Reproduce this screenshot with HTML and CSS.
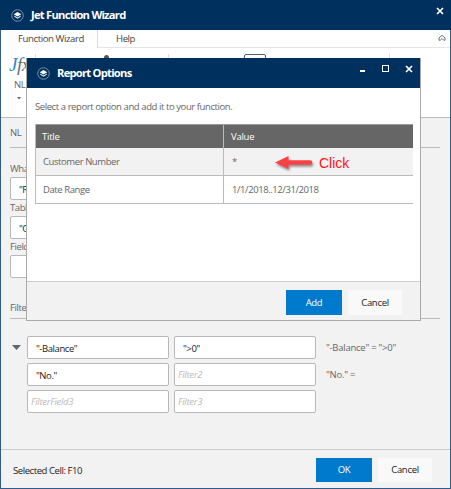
FILE: index.html
```html
<!DOCTYPE html>
<html lang="en">
<head>
<meta charset="utf-8">
<title>Jet Function Wizard</title>
<link rel="stylesheet" href="styles.css">
</head>
<body>
<svg width="0" height="0" class="defs">
  <symbol id="logo" viewBox="0 0 14 14">
    <circle cx="7" cy="7" r="6.2" fill="none" stroke="#8fa4bd" stroke-width=".9"/>
    <path d="M7 3.2 11 5.7 7 8.1 3 5.7Z" fill="#fff"/>
    <path d="M3.5 7 7 9.1l3.5-2.1v1.4L7 10.6 3.5 8.4Z" fill="#dfe6ee"/>
  </symbol>
  <symbol id="close" viewBox="0 0 8 8"><path d="M1 1 7 7M7 1 1 7" stroke="#fff" stroke-width="1.7"/></symbol>
</svg>
<main class="window">
  <header class="titlebar">
    <svg class="logo"><use href="#logo"/></svg>
    <h1 class="title main-title">Jet Function Wizard</h1>
    <svg class="close main-close"><use href="#close"/></svg>
  </header>
  <nav class="tabs">
    <span class="tab active">Function Wizard</span>
    <span class="tab">Help</span>
    <svg class="collapse" viewBox="0 0 8 8"><path d="M1 4 4 1.3 7 4V6.2H5.7L4 4.5 2.3 6.2H1Z" fill="none" stroke="#555e70" stroke-width=".9"/></svg>
  </nav>
  <section class="ribbon">
    <div class="tool">
      <div class="jfx"><span class="j">J</span>fx</div>
      <div class="tool-name">NL</div>
      <svg class="caret" viewBox="0 0 4 3"><path d="M0 0H4L2 2.5Z" fill="#666"/></svg>
    </div>
    <i class="sep sep-a"></i><i class="dot"></i><i class="sep sep-b"></i><i class="box"></i><i class="sep sep-c"></i>
  </section>
  <section class="form">
    <h2 class="heading">NL</h2>
    <div class="fields">
      <label>What</label><div class="input">"R</div>
      <label>Table</label><div class="input">"C</div>
      <label>Field</label><div class="input"></div>
    </div>
    <h2 class="heading filters-heading">Filters</h2>
    <div class="filters">
      <svg class="expander" viewBox="0 0 9 5"><path d="M0 0H9L4.5 5Z" fill="#5c6675"/></svg>
      <div class="input">"-Balance"</div><div class="input">"&gt;0"</div><span class="expr">"-Balance" = "&gt;0"</span>
      <i></i>
      <div class="input">"No."</div><div class="input hint">Filter2</div><span class="expr">"No." =</span>
      <i></i>
      <div class="input hint">FilterField3</div><div class="input hint">Filter3</div>
    </div>
  </section>
  <footer class="footer">
    <span class="status">Selected Cell: F10</span>
    <button class="btn primary">OK</button>
    <button class="btn">Cancel</button>
  </footer>
</main>
<section class="dialog">
  <header class="titlebar">
    <svg class="logo"><use href="#logo"/></svg>
    <h1 class="title">Report Options</h1>
    <i class="min"></i><i class="max"></i>
    <svg class="close"><use href="#close"/></svg>
  </header>
  <div class="content">
    <p class="intro">Select a report option and add it to your function.</p>
    <div class="table">
      <div class="row head"><span>Title</span><span>Value</span></div>
      <div class="row selected"><span>Customer Number</span><span>*</span></div>
      <div class="row"><span>Date Range</span><span>1/1/2018..12/31/2018</span></div>
    </div>
  </div>
  <footer class="dialog-footer">
    <button class="btn primary">Add</button>
    <button class="btn">Cancel</button>
  </footer>
</section>
<div class="callout">
  <svg class="arrow" viewBox="0 0 42 20"><path d="M2 8.5 15.5 2V6.2H37a2.3 2.3 0 0 1 0 4.6H15.5V15Z" fill="#fb4143"/></svg>
  <span>Click</span>
</div>
</body>
</html>
```
FILE: styles.css
```css
* { box-sizing: border-box; }
body {
  margin: 0;
  width: 451px;
  height: 489px;
  overflow: hidden;
  font: 9.5px/12px "Open Sans", "Noto Sans", sans-serif;
  letter-spacing: -0.42px;
  color: #666;
}
h1, h2, p { margin: 0; font: inherit; }
svg, i { display: block; flex: none; }
.defs { position: absolute; }

.window {
  display: flex;
  flex-direction: column;
  height: 489px;
  background: #f2f2f2;
  border: solid #315b8b;
  border-width: 0 1px 1px;
}
.titlebar {
  display: flex;
  align-items: center;
  height: 30px;
  flex: none;
  background: #00305e;
  color: #fff;
  padding-left: 10px;
}
.window > .titlebar { margin: 0 -1px; padding-left: 11px; }
.logo { width: 13px; height: 13px; margin-top: 1px; }
.title {
  flex: 1;
  margin-left: 7px;
  font-size: 11.2px;
  font-weight: 700;
  letter-spacing: -0.75px;
}
.close { width: 8px; height: 8px; margin: -8px 7px 0 0; }

.tabs {
  display: flex;
  height: 18px;
  flex: none;
  background: #fff;
  border-bottom: 1px solid #e5e5e5;
  color: #444;
}
.tab { padding: 3px 0 0 18px; font-size: 9.6px; }
.tab.active {
  width: 97px;
  height: 18px;
  padding-left: 17px;
  background: #fff;
  border-right: 1px solid #ddd;
}
.collapse { width: 8px; height: 8px; margin: 4px 4px 0 auto; }

.ribbon {
  display: flex;
  height: 70px;
  flex: none;
  background: #fff;
  border-bottom: 1px solid #bbb;
  padding-top: 6px;
}
.tool { width: 34px; padding: 0 0 0 8px; }
.jfx {
  font: italic 19px/22px "Liberation Serif", serif;
  letter-spacing: -0.5px;
  color: #65707b;
}
.j { color: #3388c8; }
.tool-name { margin: 3px 0 0 5px; }
.caret { width: 4px; height: 3px; margin: 6px 0 0 8px; }
.sep { width: 1px; height: 58px; background: #ddd; }
.dot { width: 5px; height: 5px; margin: 1px 0 0 68px; border-radius: 50%; background: #555; }
.sep-b { margin-left: 59px; }
.box { width: 22px; height: 20px; margin-left: 75px; border: 1px solid #536078; border-radius: 2px; }
.sep-c { margin-left: 123px; }

.form { flex: 1; padding: 9px 10px 0 9px; }
.heading { height: 21px; border-bottom: 1px solid #bbb; }
.fields { width: 200px; padding-top: 15px; }
.fields label { display: block; height: 15px; }
.fields .input { margin: -1px 0 2px; }
.input {
  height: 23px;
  padding: 6px 8px 0;
  background: #fff;
  border: 1px solid #b8b8b8;
  border-radius: 2px;
  color: #222;
}
.input.hint { padding: 5px 3px 0; font-style: italic; letter-spacing: -0.3px; color: #bbb; }
.filters-heading { margin-top: 24px; height: 17px; }
.filters {
  display: grid;
  grid-template-columns: 12px 142px 142px 1fr;
  grid-auto-rows: 23px;
  gap: 4px 5px;
  padding-top: 17px;
}
.expander { width: 9px; height: 5px; margin: 9px 0 0 2px; }
.expr { padding: 6px 0 0 5px; letter-spacing: -0.25px; }

.footer {
  display: flex;
  height: 39px;
  flex: none;
  padding: 8px 18px 0 12px;
  border-top: 1px solid #ccc;
  color: #222;
}
.status { flex: 1; padding-top: 7px; }
.btn {
  width: 54px;
  height: 24px;
  padding: 0;
  margin-left: 6px;
  border: 0;
  background: #f9f9f9;
  font: inherit;
  letter-spacing: -0.3px;
  color: #222;
}
.btn.primary { width: 56px; background: #007acc; color: #fff; }

.dialog {
  position: absolute;
  left: 26px;
  top: 58px;
  width: 395px;
  height: 263px;
  display: flex;
  flex-direction: column;
  background: #fff;
  border: 1px solid #aaa;
  border-top: 0;
}
.min { width: 5px; height: 2px; margin: -4px 17px 0 0; background: #fff; }
.max { width: 7px; height: 7px; margin: -9px 16px 0 0; border: 1px solid #fff; }
.content { flex: 1; padding: 13px 7px 0 8px; }
.intro { height: 23px; }
.table { border-left: 1px solid #bbb; }
.row { display: grid; grid-template-columns: 187px 1fr; height: 28px; border-bottom: 1px solid #bbb; }
.row span { padding: 8px 0 0 7px; }
.row span + span { padding-left: 8px; border-left: 1px solid #bbb; }
.row.head { height: 24px; background: #666; color: #fff; border-top: 1px solid #999; border-bottom: 0; }
.row.head span { padding-top: 6px; padding-left: 6px; letter-spacing: -0.25px; }
.row.head span + span { padding-left: 7px; }
.row.selected { background: #f2f2f2; }
.dialog-footer {
  display: flex;
  justify-content: flex-end;
  height: 39px;
  padding: 8px 18px 0 0;
  background: #f2f2f2;
  border-top: 1px solid #ccc;
}
.dialog .btn { height: 25px; }
.callout {
  position: absolute;
  left: 273px;
  top: 154px;
  display: flex;
  color: #f11;
  font: 14px/19px "Liberation Sans", sans-serif;
  letter-spacing: 0;
}
.arrow { width: 42px; height: 20px; margin-right: 4px; filter: drop-shadow(1px 2px 1px #0006); }
```
